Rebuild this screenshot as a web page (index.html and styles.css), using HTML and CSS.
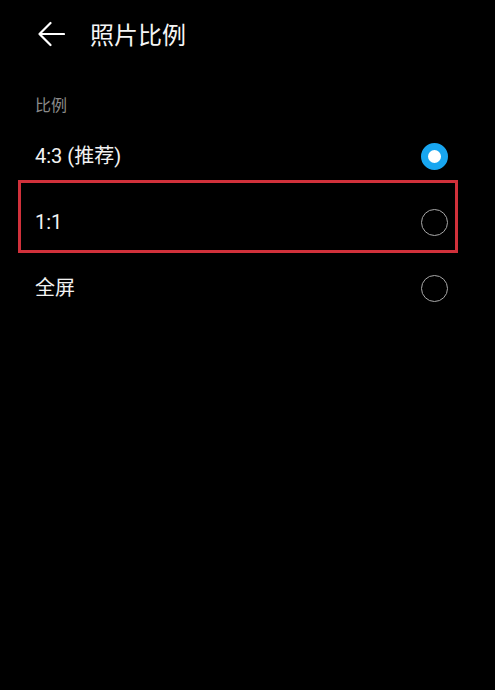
FILE: index.html
```html
<!DOCTYPE html>
<html lang="zh-CN">
<head>
<meta charset="utf-8">
<title>照片比例</title>
<link rel="stylesheet" href="styles.css">
</head>
<body>
<div class="page">
  <header class="header">
    <svg class="back" width="28" height="26" viewBox="0 0 28 26" aria-hidden="true">
      <path d="M27 13 H2.5 M13.5 2 L2.5 13 L13.5 24" fill="none" stroke="#fff" stroke-width="2.2" stroke-linecap="round" stroke-linejoin="round"/>
    </svg>
    <h1 class="title">照片比例</h1>
  </header>
  <div class="section-label">比例</div>
  <ul class="list">
    <li class="row">
      <span class="row-text">4:3 (推荐)</span>
      <span class="radio radio-on"></span>
    </li>
    <li class="row row-marked">
      <span class="row-text">1:1</span>
      <span class="radio"></span>
      <span class="mark"></span>
    </li>
    <li class="row">
      <span class="row-text">全屏</span>
      <span class="radio"></span>
    </li>
  </ul>
</div>
</body>
</html>
```

FILE: styles.css
```css
html, body {
  margin: 0;
  padding: 0;
  background: #000;
}
body {
  width: 495px;
  height: 690px;
  overflow: hidden;
  font-family: Roboto, "Noto Sans CJK SC", sans-serif;
  color: #f2f2f2;
}
.page {
  display: flex;
  flex-direction: column;
}
.header {
  height: 68px;
  display: flex;
  align-items: center;
  padding-left: 37px;
}
.back {
  display: block;
  margin-top: -1px;
}
.title {
  margin: 0 0 0 25px;
  font-size: 24px;
  font-weight: 400;
  line-height: 30px;
  color: #f5f5f5;
  font-family: "Noto Sans CJK SC", sans-serif;
}
.section-label {
  margin-top: 26px;
  padding-left: 35px;
  height: 20px;
  line-height: 20px;
  font-size: 16px;
  color: #8a8a8a;
  font-family: "Noto Sans CJK SC", sans-serif;
}
.list {
  list-style: none;
  margin: 9px 0 0;
  padding: 0;
}
.row {
  position: relative;
  height: 66px;
  display: flex;
  align-items: center;
  justify-content: space-between;
  padding: 0 47px 0 35px;
}
.row-text {
  font-size: 20px;
  line-height: 26px;
  color: #f2f2f2;
}
.radio {
  box-sizing: border-box;
  width: 27px;
  height: 27px;
  border-radius: 50%;
  border: 1.5px solid #a8a8a8;
}
.radio-on {
  border: 7px solid #18a6f0;
  background: #fff;
}
.mark {
  position: absolute;
  left: 18px;
  top: -9px;
  width: 440px;
  height: 73px;
  box-sizing: border-box;
  border: 3px solid #d0313b;
  pointer-events: none;
}
```
